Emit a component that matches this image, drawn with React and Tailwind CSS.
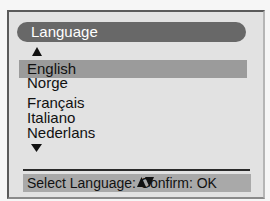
const languages = [
  { name: "Norge", mt: "mt-[-3px]" },
  { name: "Français", mt: "mt-[5px]" },
  { name: "Italiano", mt: "mt-0" },
  { name: "Nederlans", mt: "mt-0" },
];

function Triangle({ down = false, className = "" }) {
  return (
    <svg viewBox="0 0 10 9" className={className} preserveAspectRatio="none">
      <polygon points={down ? "0,0 10,0 5,9" : "5,0 10,9 0,9"} fill="#111" />
    </svg>
  );
}

export default function App() {
  return (
    <div
      className="w-[270px] h-[201px] bg-[#f6f6f6] pt-[10px] pl-[7px] overflow-hidden"
      style={{ fontFamily: '"Liberation Sans", Arial, sans-serif' }}
    >
      <div className="w-[258px] h-[189px] border-2 border-[#5a5a5a] border-r-[#b5b5b5] border-b-[#8a8a8a] bg-[#e2e2e2] flex flex-col">
        {/* Title pill */}
        <div className="mt-[10px] ml-[8px] w-[229px] h-[20px] rounded-full bg-[#686868] pl-[14px] text-[15px] leading-[20px] text-white">
          Language
        </div>

        {/* Scroll up */}
        <Triangle className="mt-[5px] ml-[23px] w-[10px] h-[9px]" />

        {/* Selected row */}
        <div className="mt-[4px] ml-[10px] w-[228px] h-[18px] bg-[#9b9b9b] pl-[8px] text-[15px] leading-[18px] text-[#111]">
          English
        </div>

        {languages.map((l) => (
          <div key={l.name} className={`${l.mt} ml-[18px] h-[15px] text-[15px] leading-[15px] text-[#111]`}>
            {l.name}
          </div>
        ))}

        {/* Scroll down */}
        <Triangle down className="mt-[4px] ml-[22px] w-[11px] h-[8px]" />

        {/* Separator */}
        <div className="mt-[17px] ml-[14px] w-[227px] h-[2px] bg-[#2a2a2a]" />

        {/* Status bar */}
        <div className="mt-[3px] ml-[14px] w-[228px] h-[18px] bg-[#a9a9a9] pl-[4px] text-[14px] leading-[18px] text-[#111] whitespace-nowrap">
          Select Language:{" "}
          <span className="relative">
            Co
            <span className="absolute left-[-3px] top-[2px] flex items-end">
              <Triangle className="w-[9px] h-[10px]" />
              <Triangle down className="w-[9px] h-[10px] -ml-[1px]" />
            </span>
          </span>
          nfirm: OK
        </div>
      </div>
    </div>
  );
}
